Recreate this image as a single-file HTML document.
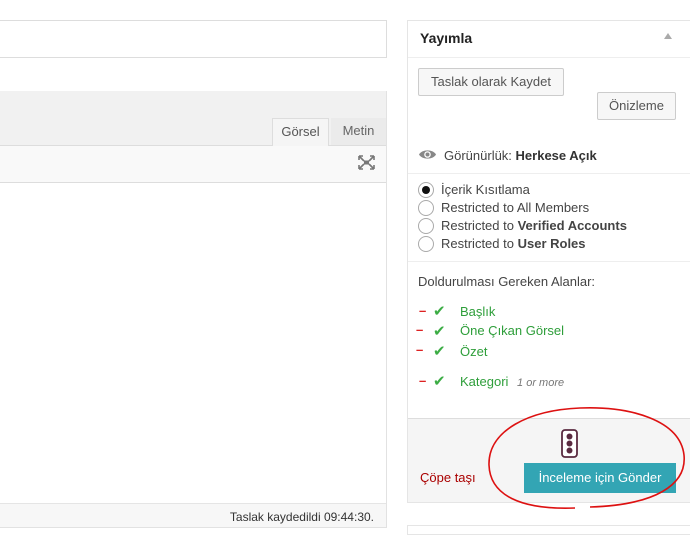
<!DOCTYPE html>
<html><head><meta charset="utf-8"><style>
*{box-sizing:border-box;margin:0;padding:0}
body{width:690px;height:529px;background:#fff;font-family:"Liberation Sans","DejaVu Sans",sans-serif;font-size:13px;color:#444;position:relative;overflow:hidden}
.a{position:absolute}
.btn{position:absolute;border:1px solid #ccc;background:#f7f7f7;color:#555;font-size:13px;text-align:center;line-height:25px;border-radius:2px}
.radio{position:absolute;left:418px;width:16px;height:16px;border:1px solid #aaa;border-radius:50%;background:#fff}
.rl{position:absolute;left:441px;font-size:13px;color:#444}
.g{color:#2e9e3a}
.dash{position:absolute;color:#d22;font-weight:bold}
.chk{position:absolute;left:433px;color:#3cad45;font-size:15px}
</style></head><body>
<div class="a" style="left:-2px;top:20px;width:389px;height:38px;border:1px solid #ddd;background:#fff"></div>
<div class="a" style="left:-2px;top:91px;width:389px;height:437px;border:1px solid #e2e2e2;border-top:none;background:#fff"></div>
<div class="a" style="left:0;top:91px;width:386px;height:55px;background:#f1f1f1;border-bottom:1px solid #ddd"></div>
<div class="a" style="left:272px;top:118px;width:57px;height:28px;background:#f5f5f5;border:1px solid #ddd;border-bottom:none;text-align:center;line-height:26px;color:#555">Görsel</div>
<div class="a" style="left:331px;top:118px;width:55px;height:27px;background:#ebebeb;text-align:center;line-height:26px;color:#666">Metin</div>
<div class="a" style="left:0;top:146px;width:386px;height:37px;background:#f9f9f9;border-bottom:1px solid #ddd"></div>
<svg class="a" style="left:358px;top:155px" width="17" height="15" viewBox="0 0 17 15"><path d="M1 1h4M1 1v4M1 1l5 5M16 1h-4M16 1v4M16 1l-5 5M1 14h4M1 14v-4M1 14l5-5M16 14h-4M16 14v-4M16 14l-5-5" stroke="#777" stroke-width="1.6" fill="none"/><rect x="6" y="5.5" width="5" height="4" fill="#777"/></svg>
<div class="a" style="left:0;top:503px;width:386px;height:24px;background:#f7f7f7;border-top:1px solid #e5e5e5;text-align:right;padding-right:12px;line-height:26px;font-size:12px;color:#333">Taslak kaydedildi 09:44:30.</div>

<div class="a" style="left:407px;top:20px;width:290px;height:483px;border:1px solid #e5e5e5;background:#fff"></div>
<div class="a" style="left:408px;top:57px;width:290px;border-top:1px solid #eee"></div>
<div class="a" style="left:420px;top:30px;font-size:14px;font-weight:bold;color:#222">Yayımla</div>
<div class="a" style="left:664px;top:33px;width:0;height:0;border-left:4px solid transparent;border-right:4px solid transparent;border-bottom:6px solid #aaa"></div>
<div class="btn" style="left:418px;top:68px;width:146px;height:28px">Taslak olarak Kaydet</div>
<div class="btn" style="left:597px;top:92px;width:79px;height:28px">Önizleme</div>
<svg class="a" style="left:418px;top:148px" width="19" height="13" viewBox="0 0 19 13"><path d="M1 6.5C4 1 15 1 18 6.5C15 12 4 12 1 6.5Z" fill="#888"/><circle cx="9.5" cy="6.5" r="3.3" fill="#fff"/><circle cx="9.5" cy="6.5" r="2" fill="#888"/></svg>
<div class="a" style="left:444px;top:148px">Görünürlük: <b style="color:#333">Herkese Açık</b></div>
<div class="a" style="left:408px;top:173px;width:290px;border-top:1px solid #eee"></div>
<div class="radio" style="top:182px"><div style="width:8px;height:8px;background:#111;border-radius:50%;margin:3px"></div></div>
<div class="rl" style="top:182px">İçerik Kısıtlama</div>
<div class="radio" style="top:200px"></div><div class="rl" style="top:200px">Restricted to All Members</div>
<div class="radio" style="top:218px"></div><div class="rl" style="top:218px">Restricted to <b>Verified Accounts</b></div>
<div class="radio" style="top:236px"></div><div class="rl" style="top:236px">Restricted to <b>User Roles</b></div>
<div class="a" style="left:408px;top:261px;width:290px;border-top:1px solid #eee"></div>
<div class="a" style="left:418px;top:274px">Doldurulması Gereken Alanlar:</div>
<div class="dash" style="left:419px;top:303px">–</div><div class="chk" style="top:302px">✔</div><div class="a g" style="left:460px;top:304px">Başlık</div>
<div class="dash" style="left:416px;top:322px">–</div><div class="chk" style="top:322px">✔</div><div class="a g" style="left:460px;top:323px">Öne Çıkan Görsel</div>
<div class="dash" style="left:416px;top:342px">–</div><div class="chk" style="top:342px">✔</div><div class="a g" style="left:460px;top:344px">Özet</div>
<div class="dash" style="left:419px;top:373px">–</div><div class="chk" style="top:372px">✔</div><div class="a g" style="left:460px;top:374px">Kategori <i style="color:#777;font-size:11px;margin-left:5px">1 or more</i></div>
<div class="a" style="left:408px;top:418px;width:290px;height:84px;background:#f5f5f5;border-top:1px solid #ddd"></div>
<svg class="a" style="left:561px;top:429px" width="17" height="29" viewBox="0 0 17 29"><rect x="1" y="1" width="15" height="27" rx="3" fill="#fff" stroke="#5a2a40" stroke-width="1.8"/><circle cx="8.5" cy="7.5" r="3" fill="#5a2a40"/><circle cx="8.5" cy="14.5" r="3" fill="#5a2a40"/><circle cx="8.5" cy="21.5" r="3" fill="#5a2a40"/></svg>
<div class="a" style="left:420px;top:470px;color:#a00">Çöpe taşı</div>
<div class="a" style="left:524px;top:463px;width:152px;height:30px;background:#33a5b4;color:#fff;text-align:center;line-height:30px;font-size:13px">İnceleme için Gönder</div>
<svg class="a" style="left:480px;top:400px" width="210" height="115" viewBox="0 0 210 115"><path d="M95 108C40 110 10 95 9 65C8 30 50 10 100 8C150 6 200 20 204 55C207 85 175 105 110 107" fill="none" stroke="#d11" stroke-width="1.6"/></svg>
<div class="a" style="left:407px;top:525px;width:290px;height:10px;border:1px solid #e5e5e5"></div>
</body></html>
